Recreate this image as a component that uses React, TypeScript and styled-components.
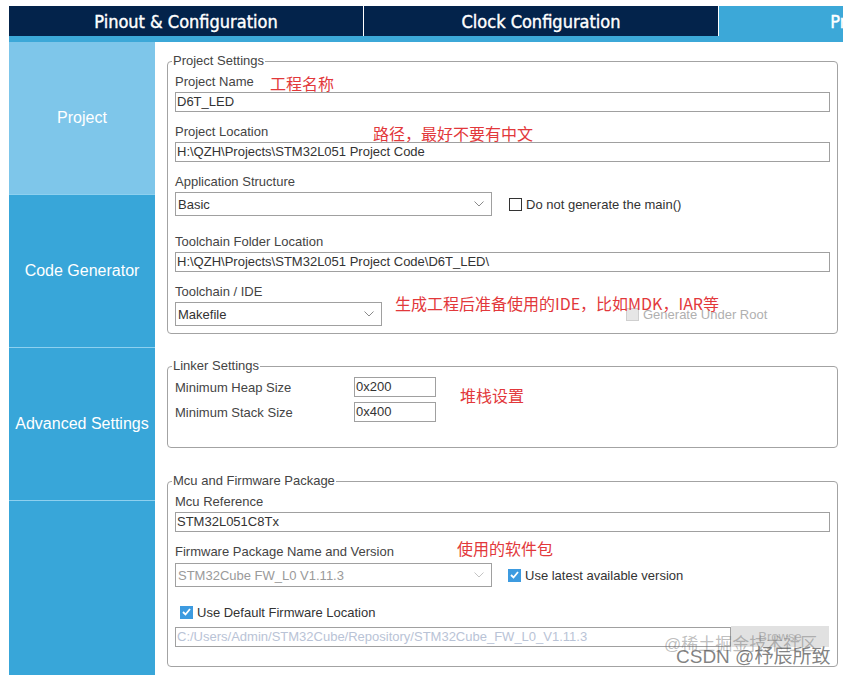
import React from "react";
import styled, { createGlobalStyle } from "styled-components";

const GlobalStyle = createGlobalStyle`
  html, body {
    margin: 0;
    padding: 0;
    background: #ffffff;
  }
  body {
    font-family: "Liberation Sans", Arial, sans-serif;
  }
`;

const Page = styled.div`
  position: relative;
  width: 843px;
  height: 675px;
  overflow: hidden;
  box-sizing: border-box;
  padding: 6px 0 0 9px;
  display: flex;
  flex-direction: column;
  background: #fff;
`;

const TabBar = styled.div`
  display: flex;
  height: 30px;
  background: #03234b;
  overflow: hidden;
  flex: none;
`;

const Tab = styled.div<{ $active?: boolean }>`
  flex: none;
  width: 354px;
  display: flex;
  align-items: center;
  justify-content: center;
  white-space: nowrap;
  color: #fff;
  font-family: "DejaVu Sans Condensed", "Liberation Sans Narrow", sans-serif;
  font-weight: normal;
  font-size: 18px;
  -webkit-text-stroke: 0.4px #fff;
  background: ${(p) => (p.$active ? "#3ca8d8" : "transparent")};
  border-right: 1px solid ${(p) => (p.$active ? "transparent" : "#ffffff")};
`;

const Strip = styled.div`
  height: 6px;
  background: #3ca8d8;
  flex: none;
`;

const Main = styled.div`
  flex: 1;
  display: flex;
  min-height: 0;
`;

const Sidebar = styled.div`
  width: 146px;
  flex: none;
  background: #38a6d9;
  display: flex;
  flex-direction: column;
`;

const NavItem = styled.div<{ $active?: boolean }>`
  height: 152px;
  flex: none;
  border-bottom: 1px solid #8ed0ef;
  background: ${(p) => (p.$active ? "#7ec6ea" : "transparent")};
  display: flex;
  align-items: center;
  justify-content: center;
  color: #fff;
  font-size: 16px;
`;

const Content = styled.div`
  flex: 1;
  padding: 11px 5px 0 12px;
  min-width: 0;
`;

const Group = styled.fieldset<{ $gap?: number; $pt?: number; $pb?: number }>`
  margin: 0 0 ${(p) => p.$gap ?? 0}px;
  border: 1px solid #a3a3a3;
  border-radius: 4px;
  padding: ${(p) => p.$pt ?? 5}px 7px ${(p) => p.$pb ?? 7}px;
  min-width: 0;
`;

const Legend = styled.legend`
  padding: 0 1px;
  margin-left: -3px;
  font-size: 13px;
  line-height: 16px;
  color: #444;
`;

const Field = styled.div<{ $gap?: number }>`
  position: relative;
  margin-bottom: ${(p) => p.$gap ?? 0}px;
`;

const Label = styled.div<{ $gap?: number }>`
  height: 16px;
  line-height: 16px;
  font-size: 13px;
  color: #444;
  margin-bottom: ${(p) => p.$gap ?? 2}px;
  white-space: nowrap;
`;

const TextBox = styled.div<{ $width?: number; $disabled?: boolean }>`
  box-sizing: border-box;
  height: 20px;
  width: ${(p) => (p.$width ? `${p.$width}px` : "100%")};
  flex: none;
  border: 1px solid #a0a0a0;
  padding: 0 1px;
  font-size: 13px;
  line-height: 18px;
  color: ${(p) => (p.$disabled ? "#b9c3d6" : "#333")};
  white-space: nowrap;
  overflow: hidden;
`;

const SelectRow = styled.div`
  display: flex;
  align-items: center;
`;

const Select = styled.div<{ $width: number; $disabled?: boolean }>`
  box-sizing: border-box;
  width: ${(p) => p.$width}px;
  height: 24px;
  flex: none;
  border: 1px solid #a0a0a0;
  display: flex;
  align-items: center;
  justify-content: space-between;
  padding: 0 7px 0 2px;
  font-size: 13px;
  color: ${(p) => (p.$disabled ? "#9a9a9a" : "#333")};
  svg {
    stroke: ${(p) => (p.$disabled ? "#c4c4c4" : "#8a8a8a")};
  }
`;

const Check = styled.label<{ $ml?: number; $disabled?: boolean }>`
  display: flex;
  align-items: center;
  gap: 4px;
  margin-left: ${(p) => p.$ml ?? 0}px;
  font-size: 13px;
  color: ${(p) => (p.$disabled ? "#b0b0b0" : "#333")};
  white-space: nowrap;
`;

const Box = styled.span<{ $checked?: boolean; $disabled?: boolean }>`
  box-sizing: border-box;
  width: 13px;
  height: 13px;
  flex: none;
  display: flex;
  align-items: center;
  justify-content: center;
  border: 1px solid
    ${(p) => (p.$checked ? "#3d9be0" : p.$disabled ? "#cfcfcf" : "#333")};
  background: ${(p) =>
    p.$checked ? "#3d9be0" : p.$disabled ? "#e6e6e6" : "#fff"};
`;

const LinkerRows = styled.div`
  position: relative;
  display: flex;
  flex-direction: column;
  gap: 5px;
`;

const LinkerRow = styled.div`
  display: flex;
  align-items: center;
  font-size: 13px;
  color: #444;
  span {
    width: 179px;
    flex: none;
  }
`;

const CheckRow = styled.div`
  margin: 17px 0 6px 5px;
  height: 16px;
  display: flex;
  align-items: center;
`;

const PathRow = styled.div`
  display: flex;
  align-items: center;
`;

const BrowseButton = styled.div`
  box-sizing: border-box;
  width: 98px;
  height: 21px;
  flex: none;
  background: #e1e1e1;
  color: #b3b3b3;
  font-size: 13px;
  display: flex;
  align-items: center;
  justify-content: center;
`;

const Note = styled.div<{ $left: number; $top: number }>`
  position: absolute;
  left: ${(p) => p.$left}px;
  top: ${(p) => p.$top}px;
  font-family: "Noto Sans CJK SC", "Liberation Sans", sans-serif;
  font-size: 16px;
  line-height: 18px;
  color: #e2383b;
  white-space: nowrap;
`;

const Watermark = styled.div<{ $left: number; $top: number; $size: number; $color: string }>`
  position: absolute;
  left: ${(p) => p.$left}px;
  top: ${(p) => p.$top}px;
  font-family: "Liberation Sans", "Noto Sans CJK SC", sans-serif;
  font-size: ${(p) => p.$size}px;
  line-height: 1;
  color: ${(p) => p.$color};
  white-space: nowrap;
  pointer-events: none;
`;

const Chevron = () => (
  <svg width="10" height="6" viewBox="0 0 10 6" fill="none" strokeWidth="1">
    <polyline points="0.5,0.5 5,5 9.5,0.5" />
  </svg>
);

const Tick = () => (
  <svg width="9" height="8" viewBox="0 0 9 8" fill="none">
    <polyline points="1,4 3.5,6.5 8,1" stroke="#fff" strokeWidth="1.8" />
  </svg>
);

export default function App() {
  return (
    <>
      <GlobalStyle />
      <Page>
        <TabBar>
          <Tab>Pinout &amp; Configuration</Tab>
          <Tab>Clock Configuration</Tab>
          <Tab $active>Project Manager</Tab>
        </TabBar>
        <Strip />
        <Main>
          <Sidebar>
            <NavItem $active>Project</NavItem>
            <NavItem>Code Generator</NavItem>
            <NavItem>Advanced Settings</NavItem>
          </Sidebar>
          <Content>
            <Group $gap={24} $pt={5} $pb={7}>
              <Legend>Project Settings</Legend>
              <Field $gap={12}>
                <Label>Project Name</Label>
                <TextBox>D6T_LED</TextBox>
                <Note $left={95} $top={0}>工程名称</Note>
              </Field>
              <Field $gap={12}>
                <Label>Project Location</Label>
                <TextBox>H:\QZH\Projects\STM32L051 Project Code</TextBox>
                <Note $left={198} $top={0}>路径，最好不要有中文</Note>
              </Field>
              <Field $gap={18}>
                <Label>Application Structure</Label>
                <SelectRow>
                  <Select $width={317}>
                    Basic
                    <Chevron />
                  </Select>
                  <Check $ml={17}>
                    <Box />
                    Do not generate the main()
                  </Check>
                </SelectRow>
              </Field>
              <Field $gap={12}>
                <Label>Toolchain Folder Location</Label>
                <TextBox>H:\QZH\Projects\STM32L051 Project Code\D6T_LED\</TextBox>
              </Field>
              <Field>
                <Label>Toolchain / IDE</Label>
                <SelectRow>
                  <Select $width={207}>
                    Makefile
                    <Chevron />
                  </Select>
                  <Check $ml={244} $disabled>
                    <Box $disabled />
                    Generate Under Root
                  </Check>
                </SelectRow>
                <Note $left={220} $top={10}>生成工程后准备使用的IDE，比如MDK，IAR等</Note>
              </Field>
            </Group>

            <Group $gap={25} $pt={3} $pb={25}>
              <Legend>Linker Settings</Legend>
              <LinkerRows>
                <LinkerRow>
                  <span>Minimum Heap Size</span>
                  <TextBox $width={82}>0x200</TextBox>
                </LinkerRow>
                <LinkerRow>
                  <span>Minimum Stack Size</span>
                  <TextBox $width={82}>0x400</TextBox>
                </LinkerRow>
                <Note $left={285} $top={9}>堆栈设置</Note>
              </LinkerRows>
            </Group>

            <Group $pt={5} $pb={19}>
              <Legend>Mcu and Firmware Package</Legend>
              <Field $gap={12}>
                <Label>Mcu Reference</Label>
                <TextBox>STM32L051C8Tx</TextBox>
              </Field>
              <Field>
                <Label $gap={3}>Firmware Package Name and Version</Label>
                <SelectRow>
                  <Select $width={317} $disabled>
                    STM32Cube FW_L0 V1.11.3
                    <Chevron />
                  </Select>
                  <Check $ml={16}>
                    <Box $checked>
                      <Tick />
                    </Box>
                    Use latest available version
                  </Check>
                </SelectRow>
                <Note $left={282} $top={-5}>使用的软件包</Note>
              </Field>
              <CheckRow>
                <Check>
                  <Box $checked>
                    <Tick />
                  </Box>
                  Use Default Firmware Location
                </Check>
              </CheckRow>
              <PathRow>
                <TextBox $width={556} $disabled>
                  C:/Users/Admin/STM32Cube/Repository/STM32Cube_FW_L0_V1.11.3
                </TextBox>
                <BrowseButton>Browse</BrowseButton>
              </PathRow>
            </Group>
          </Content>
        </Main>
        <Watermark $left={664} $top={636} $size={17} $color="rgba(110,110,110,0.45)">
          @稀土掘金技术社区
        </Watermark>
        <Watermark $left={676} $top={647} $size={19} $color="rgba(90,90,90,0.75)">
          CSDN @杼辰所致
        </Watermark>
      </Page>
    </>
  );
}
